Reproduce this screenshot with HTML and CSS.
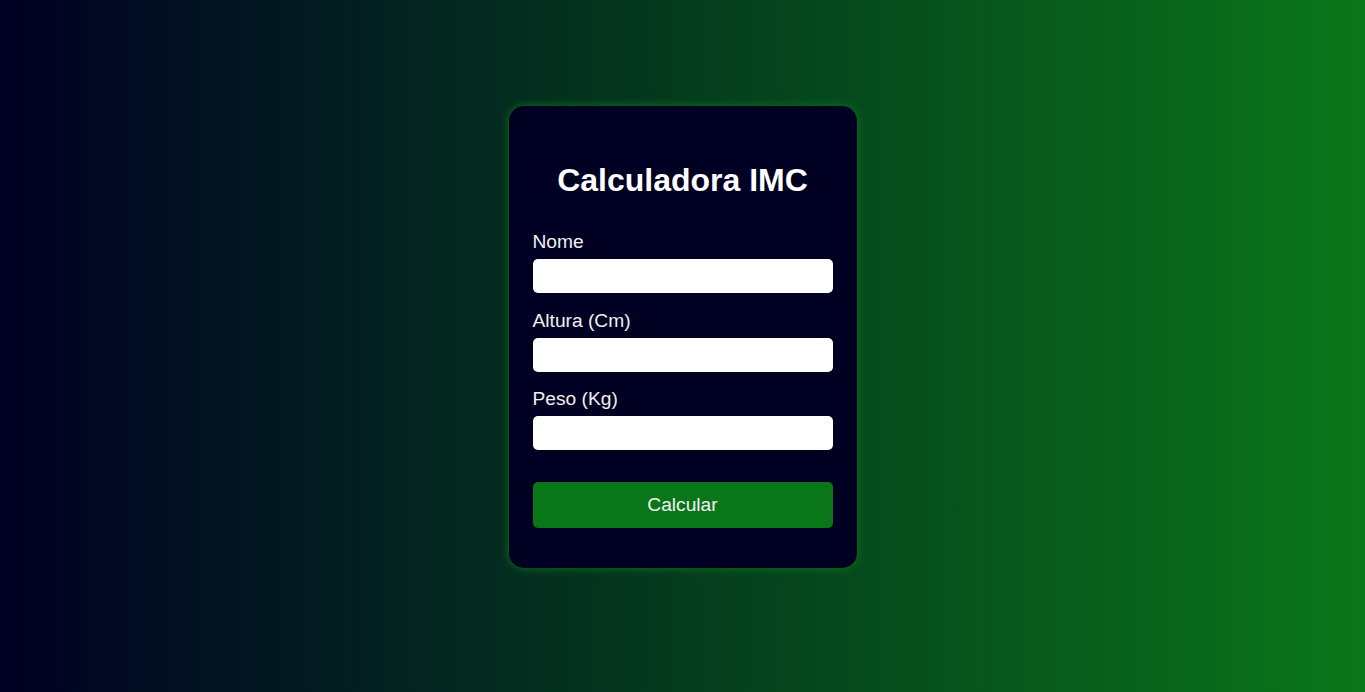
FILE: index.html
```html
<!DOCTYPE html>
<html lang="pt-BR">
<head>
<meta charset="utf-8">
<title>Calculadora IMC</title>
<link rel="stylesheet" href="styles.css">
</head>
<body>
<main class="page">
  <section class="card">
    <h1 class="title">Calculadora IMC</h1>
    <form class="form">
      <label class="label" for="nome">Nome</label>
      <input class="input" id="nome" type="text">
      <label class="label" for="altura">Altura (Cm)</label>
      <input class="input" id="altura" type="text">
      <label class="label" for="peso">Peso (Kg)</label>
      <input class="input" id="peso" type="text">
      <button class="button" type="button">Calcular</button>
    </form>
  </section>
</main>
</body>
</html>
```

FILE: styles.css
```css
* { box-sizing: border-box; }
html, body { margin: 0; padding: 0; }
body {
  font-family: "Liberation Sans", Arial, sans-serif;
  background: linear-gradient(to right, #000022, #0a761a);
  min-height: 100vh;
}
.page {
  min-height: 100vh;
  display: flex;
  align-items: center;
  justify-content: center;
  padding-bottom: 18px;
}
.card {
  width: 348px;
  background: #000022;
  border-radius: 15px;
  padding: 40px 24px;
  box-shadow: 0 0 10px #0a761a;
  color: #f2f2f2;
}
.title {
  margin: 16px 0 32px;
  font-size: 32px;
  font-weight: bold;
  text-align: center;
  color: #ffffff;
  line-height: 37px;
}
.form {
  display: flex;
  flex-direction: column;
}
.label {
  font-size: 19.2px;
  line-height: 22px;
  margin-bottom: 6px;
  color: #f0f0f0;
}
.input {
  height: 34px;
  border: none;
  border-radius: 5px;
  background: #ffffff;
  margin: 0 0 16.5px;
  padding: 0 8px;
  font-size: 16px;
}
.input:last-of-type { margin-bottom: 32px; }
.button {
  height: 46px;
  border: none;
  border-radius: 5px;
  background: #0a761a;
  color: #f2f2f2;
  font-family: "Liberation Sans", Arial, sans-serif;
  font-size: 19.2px;
  cursor: pointer;
}
```
